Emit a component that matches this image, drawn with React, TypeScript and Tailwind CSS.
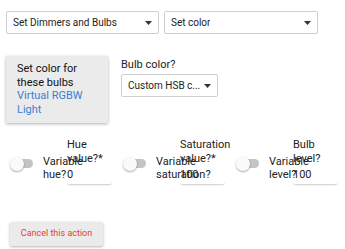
import type { ReactNode } from "react";

function Caret() {
  return (
    <svg width="7" height="4" viewBox="0 0 7 4" className="shrink-0">
      <path d="M0 0h7L3.5 4z" fill="#333" />
    </svg>
  );
}

function Select({ label, className }: { label: string; className: string }) {
  return (
    <div
      className={`flex items-center justify-between border border-[#cfcfcf] rounded-[2px] bg-white pl-[6px] pr-[6px] text-[10px] text-[#222] ${className}`}
    >
      <span className="truncate">{label}</span>
      <Caret />
    </div>
  );
}

function Toggle() {
  return (
    <div className="relative w-[24px] h-[14px] shrink-0 mt-[19px]">
      <div className="absolute left-[3px] top-[2.5px] w-[20px] h-[9px] rounded-full bg-[#c4c4c4]" />
      <div className="absolute left-0 top-0 w-[14px] h-[14px] rounded-full bg-[#fafafa] shadow-[0_1px_2px_rgba(0,0,0,0.35)]" />
    </div>
  );
}

function VarGroup({ label, input, value }: { label: ReactNode; input: ReactNode; value: string }) {
  return (
    <div className="flex items-start w-[113px] shrink-0">
      <Toggle />
      <div className="ml-[9px] w-[24px] mt-[17px] text-[11px] leading-[13px] text-[#222]">{label}</div>
      <div className="w-[45px] shrink-0">
        <div className="text-[11px] leading-[14px] text-[#222]">{input}</div>
        <div className="h-[19px] flex items-center text-[11px] text-[#222] border-b border-[#d8d8d8] rounded-b-[3px] shadow-[0_1px_1px_rgba(0,0,0,0.06)]">
          {value}
        </div>
      </div>
    </div>
  );
}

export default function App() {
  return (
    <div
      className="w-[345px] h-[249px] bg-white overflow-hidden"
      style={{ fontFamily: "Roboto, 'Liberation Sans', sans-serif" }}
    >
      <div className="flex gap-[5px] pt-[11px] pl-[6px]">
        <Select label="Set Dimmers and Bulbs" className="w-[153px] h-[23px]" />
        <Select label="Set color" className="w-[154px] h-[23px]" />
      </div>

      <div className="flex items-start mt-[22px] pl-[6px]">
        <div className="w-[102px] bg-[#ebebeb] shadow-[0_1px_3px_rgba(0,0,0,0.3)] pl-[11px] pr-[8px] pt-[6px] pb-[6px] text-[11px] leading-[13.7px] text-[#111]">
          <div>Set color for these bulbs</div>
          <div className="text-[#3a7fd5]">Virtual RGBW Light</div>
        </div>
        <div className="ml-[13px] pt-[2px]">
          <div className="text-[11px] leading-[14px] text-[#222]">Bulb color?</div>
          <Select label="Custom HSB c..." className="w-[97px] h-[23px] mt-[2px] pl-[6px]" />
        </div>
      </div>

      <div className="flex pl-[10px] mt-[15px]">
        <VarGroup label="Variable hue?" input={<>Hue value?*</>} value="0" />
        <VarGroup label="Variable saturation?" input={<>Saturation value?*</>} value="100" />
        <VarGroup label="Variable level?" input={<>Bulb level?</>} value="100" />
      </div>

      <div className="pl-[10px] mt-[34px]">
        <button className="w-[93px] h-[24px] bg-[#ebebeb] rounded-[2px] shadow-[0_1px_3px_rgba(0,0,0,0.3)] text-[9px] text-[#f0392b]">
          Cancel this action
        </button>
      </div>
    </div>
  );
}
